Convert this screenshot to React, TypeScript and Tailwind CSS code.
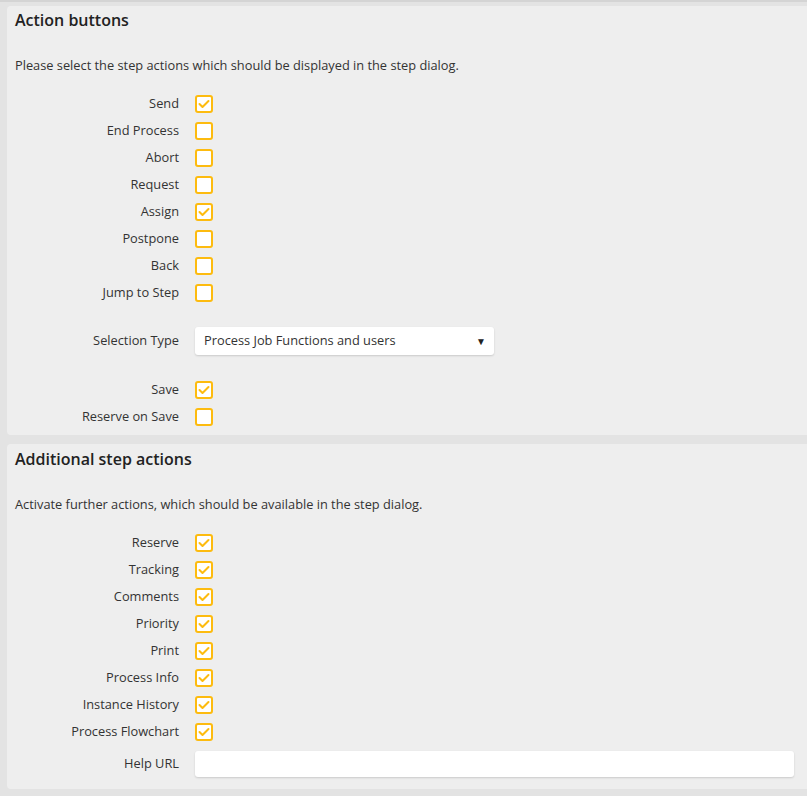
import React from "react";

const actionButtons: [string, boolean][] = [
  ["Send", true],
  ["End Process", false],
  ["Abort", false],
  ["Request", false],
  ["Assign", true],
  ["Postpone", false],
  ["Back", false],
  ["Jump to Step", false],
];

const saveOptions: [string, boolean][] = [
  ["Save", true],
  ["Reserve on Save", false],
];

const stepActions: [string, boolean][] = [
  ["Reserve", true],
  ["Tracking", true],
  ["Comments", true],
  ["Priority", true],
  ["Print", true],
  ["Process Info", true],
  ["Instance History", true],
  ["Process Flowchart", true],
];

function Checkbox({ checked }: { checked: boolean }) {
  return (
    <span className="flex h-[18px] w-[18px] items-center justify-center rounded-[3px] border-2 border-[#fdbb0f] bg-white">
      {checked && (
        <svg width="12" height="10" viewBox="0 0 12 10" fill="none">
          <path d="M1.5 5 L4.5 8 L10.5 2" stroke="#fdbb0f" strokeWidth="2" strokeLinecap="round" strokeLinejoin="round" />
        </svg>
      )}
    </span>
  );
}

function Row({ label, children }: { label: string; children: React.ReactNode }) {
  return (
    <div className="flex min-h-[27px] items-center">
      <div className="w-[164px] text-right text-[12.8px] text-[#333]">{label}</div>
      <div className="ml-4 flex flex-1 items-center">{children}</div>
    </div>
  );
}

function Panel({ title, text, top, children }: { title: string; text: string; top: string; children: React.ReactNode }) {
  return (
    <section className="ml-[7px] rounded-l-[4px] bg-[#eeeeee] pl-2 pr-[13px]">
      <h2 className={`${top} text-[16px] leading-[22px] font-semibold text-[#222]`}>{title}</h2>
      <p className="mt-[25px] text-[12.8px] leading-[18px] text-[#333]">{text}</p>
      <div className="mt-4">{children}</div>
    </section>
  );
}

export default function App() {
  return (
    <div className="min-h-[796px] border-t-2 border-[#d4d4d4] bg-[#e3e3e3] pt-1 pb-2 font-['Open_Sans',sans-serif]">
      <Panel top="pt-[3px]" title="Action buttons" text="Please select the step actions which should be displayed in the step dialog.">
        {actionButtons.map(([label, checked]) => (
          <Row key={label} label={label}>
            <Checkbox checked={checked} />
          </Row>
        ))}
        <div className="my-[21px]">
          <Row label="Selection Type">
            <div className="flex h-[28px] w-[299px] items-center justify-between rounded-[3px] bg-white pr-2 pl-[9px] text-[12.8px] text-[#333] shadow-[0_1px_2px_rgba(0,0,0,0.15)]">
              <span>Process Job Functions and users</span>
              <span className="text-[10px] text-[#222]">▼</span>
            </div>
          </Row>
        </div>
        {saveOptions.map(([label, checked]) => (
          <Row key={label} label={label}>
            <Checkbox checked={checked} />
          </Row>
        ))}
        <div className="h-[5px]" />
      </Panel>
      <div className="h-[9px]" />
      <Panel top="pt-[4px]" title="Additional step actions" text="Activate further actions, which should be available in the step dialog.">
        {stepActions.map(([label, checked]) => (
          <Row key={label} label={label}>
            <Checkbox checked={checked} />
          </Row>
        ))}
        <div className="mt-[5px]">
          <Row label="Help URL">
            <div className="h-[26px] w-full rounded-[3px] bg-white shadow-[0_1px_2px_rgba(0,0,0,0.15)]" />
          </Row>
        </div>
        <div className="h-[12px]" />
      </Panel>
    </div>
  );
}
